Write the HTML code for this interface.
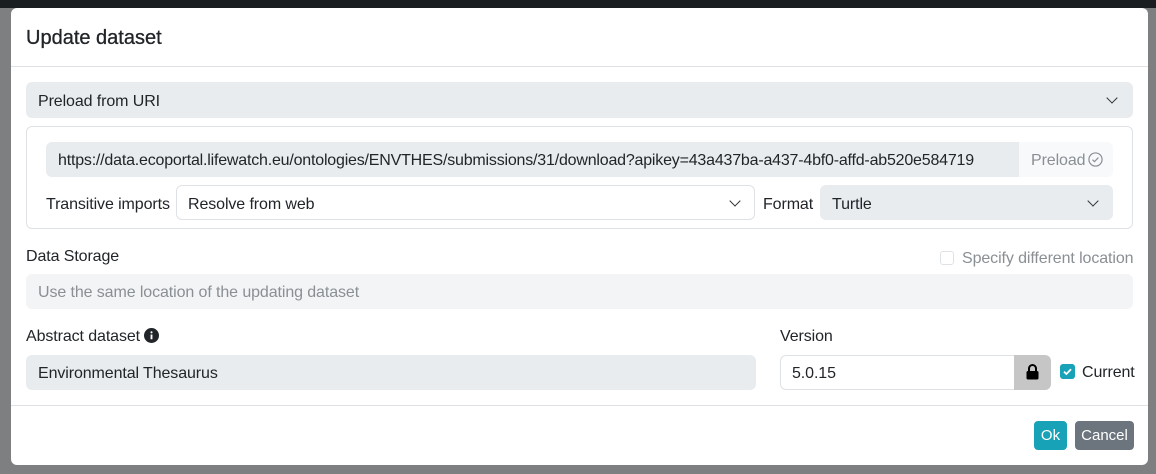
<!DOCTYPE html>
<html><head><meta charset="utf-8"><style>
*{box-sizing:border-box;margin:0;padding:0}
body{width:1156px;height:474px;overflow:hidden;background:#7d7f81;font-family:"Liberation Sans",sans-serif;font-size:16px;color:#212529;position:relative}
.top{position:absolute;left:0;top:0;width:1156px;height:8px;background:#1b1e21}
.modal{position:absolute;left:11px;top:8px;width:1137px;height:457px;background:#fff;border-radius:6px}
.a{position:absolute}
.gray{background:#e9ecef;border-radius:6px}
.chev{position:absolute;width:8px;height:8px;border-right:1.6px solid #333;border-bottom:1.6px solid #333;transform:rotate(45deg)}
.t{position:absolute;white-space:nowrap;margin-top:1px;letter-spacing:-0.1px}
</style></head><body>
<div class="top"></div>
<div class="modal">
 <div class="t" style="left:15px;top:18px;font-size:20px;letter-spacing:0;-webkit-text-stroke:0.3px #212529">Update dataset</div>
 <div class="a" style="left:0;top:58px;width:1137px;height:1px;background:#dee2e6"></div>
 <div class="a gray" style="left:15px;top:74px;width:1107px;height:36px"></div>
 <div class="t" style="left:27px;top:84px">Preload from URI</div>
 <div class="chev" style="left:1097px;top:86px"></div>
 <div class="a" style="left:15px;top:118px;width:1107px;height:103px;border:1px solid #dee2e6;border-radius:6px"></div>
 <div class="a" style="left:35px;top:134px;width:973px;height:35px;background:#e9ecef;border-radius:6px 0 0 6px"></div>
 <div class="t" style="left:47px;top:143px;letter-spacing:-0.2px">https://data.ecoportal.lifewatch.eu/ontologies/ENVTHES/submissions/31/download?apikey=43a437ba-a437-4bf0-affd-ab520e584719</div>
 <div class="a" style="left:1008px;top:134px;width:94px;height:35px;background:#f8f9fa;border-radius:0 6px 6px 0"></div>
 <div class="t" style="left:1020px;top:143px;color:#8a8f94">Preload</div>
 <svg class="a" style="left:1077px;top:144px" width="15" height="15" viewBox="0 0 16 16"><circle cx="8" cy="8" r="7" fill="none" stroke="#8a8f94" stroke-width="1.3"/><path d="M4.8 8.2l2.1 2.1 4.2-4.4" fill="none" stroke="#8a8f94" stroke-width="1.3"/></svg>
 <div class="t" style="left:35px;top:187px">Transitive imports</div>
 <div class="a" style="left:165px;top:177px;width:579px;height:35px;border:1px solid #dee2e6;border-radius:6px"></div>
 <div class="t" style="left:177px;top:187px">Resolve from web</div>
 <div class="chev" style="left:720px;top:189px"></div>
 <div class="t" style="left:752px;top:187px">Format</div>
 <div class="a gray" style="left:809px;top:177px;width:293px;height:35px"></div>
 <div class="t" style="left:821px;top:187px">Turtle</div>
 <div class="chev" style="left:1078px;top:189px"></div>
 <div class="t" style="left:15px;top:239px">Data Storage</div>
 <div class="a" style="left:929px;top:243px;width:14px;height:14px;border:1px solid #dee2e6;border-radius:3px"></div>
 <div class="t" style="left:951px;top:241px;color:#8a8f94">Specify different location</div>
 <div class="a" style="left:15px;top:266px;width:1107px;height:35px;background:#f3f4f6;border-radius:6px"></div>
 <div class="t" style="left:27px;top:275px;color:#8a8f94">Use the same location of the updating dataset</div>
 <div class="t" style="left:15px;top:319px">Abstract dataset</div>
 <svg class="a" style="left:133px;top:320px" width="15" height="15" viewBox="0 0 16 16"><circle cx="8" cy="8" r="8" fill="#212529"/><rect x="7" y="7" width="2" height="5" fill="#fff"/><circle cx="8" cy="4.6" r="1.1" fill="#fff"/></svg>
 <div class="a gray" style="left:15px;top:347px;width:730px;height:35px"></div>
 <div class="t" style="left:27px;top:356px">Environmental Thesaurus</div>
 <div class="t" style="left:769px;top:319px">Version</div>
 <div class="a" style="left:769px;top:347px;width:236px;height:35px;border:1px solid #dee2e6;border-radius:6px 0 0 6px"></div>
 <div class="t" style="left:781px;top:356px">5.0.15</div>
 <div class="a" style="left:1003px;top:347px;width:37px;height:35px;background:#c6c6c6;border-radius:0 6px 6px 0"></div>
 <svg class="a" style="left:1015px;top:356px" width="13" height="16" viewBox="0 0 13 16"><path d="M3 7V4.5a3.5 3.5 0 0 1 7 0V7" fill="none" stroke="#000" stroke-width="2"/><rect x="0.5" y="7" width="12" height="8.5" rx="1.5" fill="#000"/></svg>
 <div class="a" style="left:1049px;top:356px;width:15px;height:15px;background:#17a2b8;border-radius:3px"></div>
 <svg class="a" style="left:1049px;top:356px" width="15" height="15" viewBox="0 0 15 15"><path d="M4 7.7l2.4 2.3 4.6-4.8" fill="none" stroke="#fff" stroke-width="1.8"/></svg>
 <div class="t" style="left:1071px;top:355px">Current</div>
 <div class="a" style="left:0;top:397px;width:1137px;height:1px;background:#dee2e6"></div>
 <div class="a" style="left:1023px;top:413px;width:33px;height:29px;background:#17a2b8;border-radius:4px;color:#fff;font-size:15px;text-align:center;line-height:29px">Ok</div>
 <div class="a" style="left:1064px;top:413px;width:59px;height:29px;background:#6c757d;border-radius:4px;color:#fff;font-size:15px;text-align:center;line-height:29px">Cancel</div>
</div>
</body></html>
